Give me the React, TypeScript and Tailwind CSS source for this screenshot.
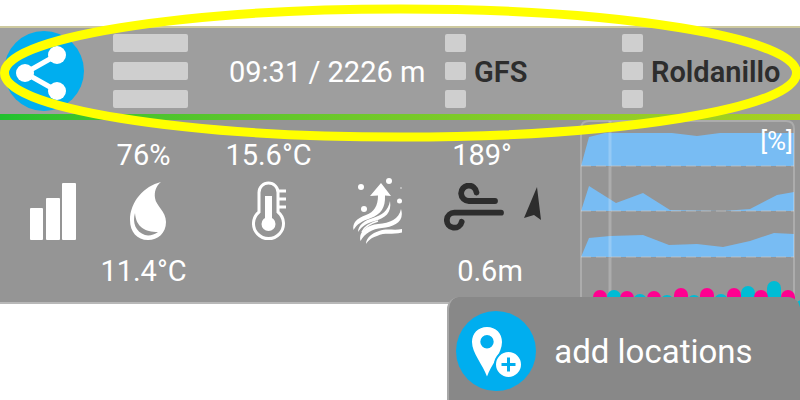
import React from 'react';

const AREAS = [
  'M1 46L9 17L25 13H92L117 16L140 13H214V46Z',
  'M1 91L9 66L36 83L63 73L90 90L143 91L170 89L197 75L214 72V91Z',
  'M1 137L9 118L30 116L63 115L89 125L117 124L143 127L170 121L194 113L214 114V137Z',
];

const BASELINES = [46, 91, 137];

const RAIN = [
  { x: 34, top: 170 },
  { x: 60, top: 174 },
  { x: 87, top: 175 },
  { x: 114, top: 175 },
  { x: 141, top: 174 },
  { x: 168, top: 166 },
  { x: 194, top: 161 },
];

const STORM = [
  { x: 20, top: 170 },
  { x: 47, top: 171 },
  { x: 74, top: 171 },
  { x: 101, top: 168 },
  { x: 127, top: 168 },
  { x: 154, top: 168 },
  { x: 181, top: 170 },
  { x: 208, top: 170 },
];

const ShareIcon = () => (
  <svg viewBox="0 0 80 80" className="size-20" aria-hidden="true">
    <g fill="#fff" stroke="#fff" strokeWidth="5">
      <path d="M53 24L21 42L53 60" fill="none" />
      <circle cx="21" cy="42" r="9" stroke="none" />
      <circle cx="53" cy="24" r="9" stroke="none" />
      <circle cx="53" cy="60" r="9" stroke="none" />
    </g>
  </svg>
);

const PinIcon = () => (
  <svg viewBox="0 0 80 80" className="size-20" aria-hidden="true">
    <path
      fill="#fff"
      fillRule="evenodd"
      d="M31 16C40 16 46 22.500 46 31C46 42 35 54 31 65.500C27 54 16 42 16 31C16 22.500 22 16 31 16ZM31 24A6.700 6.700 0 1 0 31 37.400A6.700 6.700 0 1 0 31 24Z"
    />
    <circle cx="52.500" cy="53.500" r="13.500" fill="#fff" stroke="#00aeef" strokeWidth="2" />
    <path d="M52.500 46.500V60.500M45.500 53.500H59.500" stroke="#00aeef" strokeWidth="3" />
  </svg>
);

const BarsIcon = () => (
  <svg viewBox="0 0 46 57" className="h-[57px] w-[46px]" fill="#fff" aria-hidden="true">
    <rect x="0" y="25" width="13" height="32" rx="1" />
    <rect x="16" y="15" width="14" height="42" rx="1" />
    <rect x="32" y="0" width="14" height="57" rx="1" />
  </svg>
);

const DropIcon = () => (
  <svg viewBox="0 0 36 58" className="ml-2 h-[58px] w-9" aria-hidden="true">
    <path fill="#fff" d="M31 0C26 4 24 10 25 16C26 24 36 29 36 40C36 51 28 58 18 58C7 58 0 50 0 38C0 20 14 4 31 0Z" />
    <path fill="#959595" d="M5 31C6 45 15 50 28 50C24 53 19 54 15 53C6 50 2 41 5 31Z" />
  </svg>
);

const ThermometerIcon = () => (
  <svg viewBox="0 0 34 60" className="h-[60px] w-[34px]" aria-hidden="true">
    <g fill="none" stroke="#fff" strokeWidth="3">
      <path d="M7 31V11.500A9.500 9.500 0 0 1 26 11.500V31A15 15 0 1 1 7 31Z" />
      <path d="M26 10H34M26 18H34M26 26H34" />
      <path d="M16.500 15V42" strokeWidth="7" />
    </g>
    <circle cx="16.500" cy="43" r="7" fill="#fff" />
  </svg>
);

const ThermalIcon = () => (
  <svg viewBox="0 0 50 66" className="h-[66px] w-[50px]" fill="#fff" aria-hidden="true">
    <path d="M29 5L39 18L33 17.500C33.500 30 29 36 19 40C10 43 5 46 1.500 52C0 45 5 40 14 37C22 34 26 28 26 17.500L18 18Z" />
    <path d="M38 23C40 35 33 40 23 43C15 45 10 48 6 54C6 47 13 42 21 40C30 37 36 33 38 23Z" />
    <path d="M49 31C53 44 42 49 30 50C20 51 13 55 8.500 63C6 54 15 47 26 46C38 45 47 41 49 31Z" />
    <path d="M26 43C19 45 13 48 10 54" fill="none" stroke="#fff" strokeWidth="1.500" />
    <path d="M50 51V54.500C40 57 33 54 25 58C19 60 17 62 14 66C14 60 20 55 27 53C35 50 42 53 50 51Z" />
    <circle cx="9" cy="9" r="3" />
    <circle cx="37" cy="3" r="3" />
    <circle cx="12" cy="31" r="3" />
    <circle cx="47.500" cy="23" r="2.500" />
    <circle cx="49" cy="10" r="0.700" />
  </svg>
);

const WindIcon = () => (
  <svg viewBox="0 0 60 48" className="h-12 w-[60px]" fill="none" stroke="#2d2d2d" strokeWidth="5.800" strokeLinecap="round" aria-hidden="true">
    <path d="M32.500 9.500A7.700 7.700 0 1 0 25 18H51" />
    <path d="M57 29.700H10.500A7.500 7.500 0 1 0 17.700 38.800" />
  </svg>
);

const DirectionIcon = () => (
  <svg viewBox="0 0 17 33" className="mb-2 h-[33px] w-[17px]" fill="#2d2d2d" aria-hidden="true">
    <path d="M13 0L17 33L10 28L0 31Z" />
  </svg>
);

const Grip: React.FC<{ className: string }> = ({ className }) => (
  <span className="flex shrink-0 flex-col gap-2.5">
    {[0, 1, 2].map(i => (
      <span key={i} className={`h-[18px] rounded-xs bg-[#cfcfcf] ${className}`} />
    ))}
  </span>
);

interface ReadingProps {
  top?: string;
  bottom?: string;
  topClass?: string;
  children: React.ReactNode;
}

const Reading: React.FC<ReadingProps> = ({ top, bottom, topClass = '', children }) => (
  <div className="flex min-w-0 flex-col items-center whitespace-nowrap pt-[19px] pb-3.5 text-[29px] leading-8 text-white">
    <div className={`h-8 ${topClass}`}>{top}</div>
    <div className="flex h-20 items-center">{children}</div>
    <div className="mt-1 h-8">{bottom}</div>
  </div>
);

const CloudChart = () => (
  <svg viewBox="1 0 219 182" className="w-full overflow-visible" role="img" aria-label="Cloud cover">
    {AREAS.map(d => (
      <path key={d} d={d} fill="#78bcf3" />
    ))}
    <g fill="none" stroke="#fff" strokeOpacity="0.22">
      {BASELINES.map(y => (
        <path key={y} d={`M1 ${y}H214`} stroke="#c8c8c8" strokeOpacity="0.7" strokeDasharray="10 5" />
      ))}
      <path d="M1 182V9Q1 1 9 1H206Q214 1 214 9V182" strokeWidth="2" />
      <path d="M30 1V182" strokeWidth="3" />
    </g>
    {RAIN.map(b => (
      <rect key={b.x} x={b.x - 7} y={b.top} width="14" height="30" rx="7" fill="#00bcd4" />
    ))}
    {STORM.map(b => (
      <rect key={b.x} x={b.x - 7} y={b.top} width="14" height="30" rx="7" fill="#ff0090" />
    ))}
    <rect x="215" y="180" width="14" height="14" rx="7" fill="#00bcd4" />
    <text x="213" y="30" textAnchor="end" fill="#fff" fontSize="26">[%]</text>
  </svg>
);

const App: React.FC = () => {
  return (
    <div className="relative overflow-hidden bg-white font-['Roboto',sans-serif]">
      {/* Toolbar */}
      <header className="mt-[26px] border-t-2 border-[#cdc99f] bg-[#9e9e9e]">
        <div className="grid h-[86px] grid-cols-[113fr_116fr_216fr_177fr_178fr] items-center whitespace-nowrap text-[29px] leading-8">
          <button className="ml-1 size-20 rounded-full bg-[#00aeef]" aria-label="Share">
            <ShareIcon />
          </button>
          <button className="justify-self-start" aria-label="Menu">
            <Grip className="w-[75px]" />
          </button>
          <div className="pt-0.5 text-white">09:31 / 2226 m</div>
          <button className="flex items-center gap-2 font-semibold text-[#2d2d2d]">
            <Grip className="w-[21px]" />
            <span className="pt-0.5">GFS</span>
          </button>
          <button className="flex items-center gap-2 font-semibold text-[#2d2d2d]">
            <Grip className="w-[21px]" />
            <span className="pt-0.5">Roldanillo</span>
          </button>
        </div>
        <div className="h-1.5 bg-linear-to-r from-[#1fc12f] to-[#a8d020]" />
      </header>

      {/* Current readings */}
      <main className="grid grid-cols-[105fr_77fr_173fr_44fr_182fr_219fr] border-b-2 border-[#b8b8b8] bg-[#959595]">
        <Reading>
          <BarsIcon />
        </Reading>
        <Reading top="76%" bottom="11.4°C">
          <DropIcon />
        </Reading>
        <Reading top="15.6°C">
          <ThermometerIcon />
        </Reading>
        <Reading>
          <ThermalIcon />
        </Reading>
        <Reading top="189°" bottom="0.6m" topClass="pr-4">
          <div className="flex items-center gap-5 pb-2 pl-1">
            <WindIcon />
            <DirectionIcon />
          </div>
        </Reading>
        <CloudChart />
      </main>

      {/* Location menu */}
      <button className="relative z-10 -mt-[7px] ml-auto flex h-[103px] w-[44.1%] items-center gap-[18px] rounded-t-xl border-l-2 border-[#a8a8a8] bg-[#888] pt-1 pl-[7px] text-[33px] leading-9 text-white">
        <span className="size-20 shrink-0 rounded-full bg-[#00aeef]">
          <PinIcon />
        </span>
        <span className="pt-0.5">add locations</span>
      </button>

      {/* Highlight ring around the toolbar */}
      <svg viewBox="0 0 800 146" className="pointer-events-none absolute inset-x-0 top-0 z-20 w-full" aria-hidden="true">
        <ellipse cx="400.500" cy="73" rx="396" ry="64" fill="none" stroke="#ff0" strokeWidth="9" />
      </svg>
    </div>
  );
};

export default App;
